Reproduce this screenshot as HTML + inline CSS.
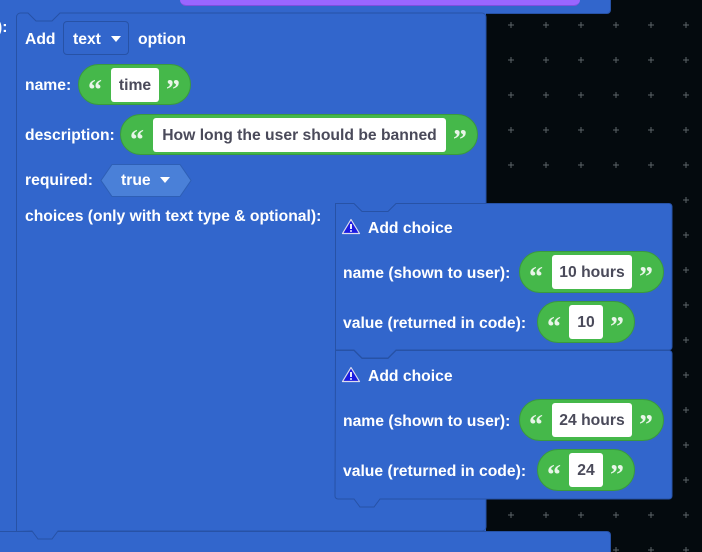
<!DOCTYPE html>
<html><head><style>
body{margin:0;width:702px;height:552px;overflow:hidden;background:#040a0e;position:relative;font-family:"Liberation Sans",sans-serif;font-weight:bold;}
.a{position:absolute;}
.t{position:absolute;color:#fff;font-size:15.7px;line-height:18px;white-space:nowrap;}
.pill{position:absolute;background:#45b84a;border:1px solid #3a9a3e;border-radius:22px;box-sizing:border-box;}
.w{position:absolute;background:#fff;border-radius:3px;color:#4a4a5a;font-size:15.7px;text-align:center;box-sizing:border-box;padding-top:2px;}
.q{position:absolute;color:#e8f5e8;font-size:28px;line-height:28px;font-family:"Liberation Serif",serif;font-weight:bold;}
.tri{position:absolute;width:0;height:0;border-left:5px solid transparent;border-right:5px solid transparent;border-top:6px solid #fff;}
</style></head><body>
<div class="a" style="left:0;top:0;width:611px;height:14px;background:#3266cc;border-bottom:1px solid #2752a6;border-right:1px solid #2752a6;border-radius:0 0 4px 0;box-sizing:border-box"></div>
<div class="a" style="left:180px;top:0;width:400px;height:5px;background:#9966ff;border-radius:0 0 20px 20px;border-bottom:1px solid #7f50dd"></div>
<div class="a" style="left:0;top:13px;width:486px;height:520px;background:#3266cc"></div>
<div class="a" style="left:0;top:531px;width:611px;height:21px;background:#3266cc;border-top:1px solid #2752a6;border-right:1px solid #2752a6;box-sizing:border-box;border-radius:0 4px 0 0"></div>
<div class="t" style="left:-3px;top:19px">):</div>
<svg class="a" style="left:0;top:0" width="702" height="552">
<path d="M16.5,531.5 V17 a4,4 0 0 1 4,-4 H28 l8,8 H52 l8,-8 H482 a4,4 0 0 1 4,4 V527 a4,4 0 0 1 -4,4 H58 l-6,8 H38 l-6,-8 Z" fill="#3266cc" stroke="#2752a6"/>
<path d="M335.5,203.5 H354 l8,8 H388 l8,-8 H669 a3,3 0 0 1 3,3 V347 a3,3 0 0 1 -3,3 H396 l-8,8 H362 l-8,-8 H335.5 Z" fill="#3266cc" stroke="#2752a6"/>
<path d="M335.5,350.5 H354 l8,8 H388 l8,-8 H669 a3,3 0 0 1 3,3 V496 a3,3 0 0 1 -3,3 H380 l-6,8 H360 l-6,-8 H338 a3,3 0 0 1 -3,-3 Z" fill="#3266cc" stroke="#2752a6"/>
<path d="M101,180.5 L112,164.5 H180 L191,180.5 L180,196.5 H112 Z" fill="#4a80d8" stroke="#2e5fb5"/>
<g stroke="#5d6468" stroke-width="1" id="g"></g>
</svg>
<script>
var g=document.getElementById('g'),s='';
for(var x=511;x<702;x+=35)for(var y=25;y<552;y+=35){
 var inB=(x<490&&y>10)||(y<16)||(y>527&&x<615)||(x>330&&x<676&&y>199&&y<510);
 if(!inB)s+='M'+(x-3)+','+y+'h6M'+x+','+(y-3)+'v6';}
g.innerHTML='<path d="'+s+'"/>';
</script>

<div class="t" style="left:25px;top:31px">Add</div>
<div class="a" style="left:63px;top:21px;width:66px;height:34px;border:1px solid #2752a6;border-radius:4px;box-sizing:border-box"></div>
<div class="t" style="left:73px;top:31px">text</div>
<div class="tri" style="left:111px;top:36px"></div>
<div class="t" style="left:138px;top:31px">option</div>

<div class="t" style="left:25px;top:77px">name:</div>
<div class="pill" style="left:78px;top:64px;width:113px;height:41px"></div>
<div class="q" style="left:88px;top:77px">“</div>
<div class="w" style="left:111px;top:68px;width:48px;height:34px;line-height:32px">time</div>
<div class="q" style="left:166px;top:77px">”</div>

<div class="t" style="left:25px;top:127px">description:</div>
<div class="pill" style="left:120px;top:114px;width:358px;height:41px"></div>
<div class="q" style="left:130px;top:127px">“</div>
<div class="w" style="left:153px;top:118px;width:293px;height:34px;line-height:32px">How long the user should be banned</div>
<div class="q" style="left:453px;top:127px">”</div>

<div class="t" style="left:25px;top:172px">required:</div>
<div class="t" style="left:121px;top:172px">true</div>
<div class="tri" style="left:160px;top:177px"></div>

<div class="t" style="left:25px;top:208px">choices (only with text type &amp; optional):</div>

<svg class="a" style="left:341px;top:218px" width="20" height="17"><path d="M10,1.5 L18.5,15.5 H1.5 Z" fill="#1a1ae0" stroke="#dde" stroke-width="1.2" stroke-linejoin="round"/><path d="M10,6v5M10,12.3v1.4" stroke="#fff" stroke-width="1.8"/></svg>
<div class="t" style="left:368px;top:220px">Add choice</div>
<div class="t" style="left:343px;top:265px">name (shown to user):</div>
<div class="pill" style="left:519px;top:251px;width:145px;height:42px"></div>
<div class="q" style="left:529px;top:264px">“</div>
<div class="w" style="left:552px;top:255px;width:80px;height:34px;line-height:32px">10 hours</div>
<div class="q" style="left:639px;top:264px">”</div>
<div class="t" style="left:343px;top:315px">value (returned in code):</div>
<div class="pill" style="left:537px;top:301px;width:98px;height:42px"></div>
<div class="q" style="left:547px;top:314px">“</div>
<div class="w" style="left:569px;top:305px;width:34px;height:34px;line-height:32px">10</div>
<div class="q" style="left:610px;top:314px">”</div>

<svg class="a" style="left:341px;top:366px" width="20" height="17"><path d="M10,1.5 L18.5,15.5 H1.5 Z" fill="#1a1ae0" stroke="#dde" stroke-width="1.2" stroke-linejoin="round"/><path d="M10,6v5M10,12.3v1.4" stroke="#fff" stroke-width="1.8"/></svg>
<div class="t" style="left:368px;top:368px">Add choice</div>
<div class="t" style="left:343px;top:413px">name (shown to user):</div>
<div class="pill" style="left:519px;top:399px;width:145px;height:42px"></div>
<div class="q" style="left:529px;top:412px">“</div>
<div class="w" style="left:552px;top:403px;width:80px;height:34px;line-height:32px">24 hours</div>
<div class="q" style="left:639px;top:412px">”</div>
<div class="t" style="left:343px;top:463px">value (returned in code):</div>
<div class="pill" style="left:537px;top:449px;width:98px;height:42px"></div>
<div class="q" style="left:547px;top:462px">“</div>
<div class="w" style="left:569px;top:453px;width:34px;height:34px;line-height:32px">24</div>
<div class="q" style="left:610px;top:462px">”</div>
</body></html>
